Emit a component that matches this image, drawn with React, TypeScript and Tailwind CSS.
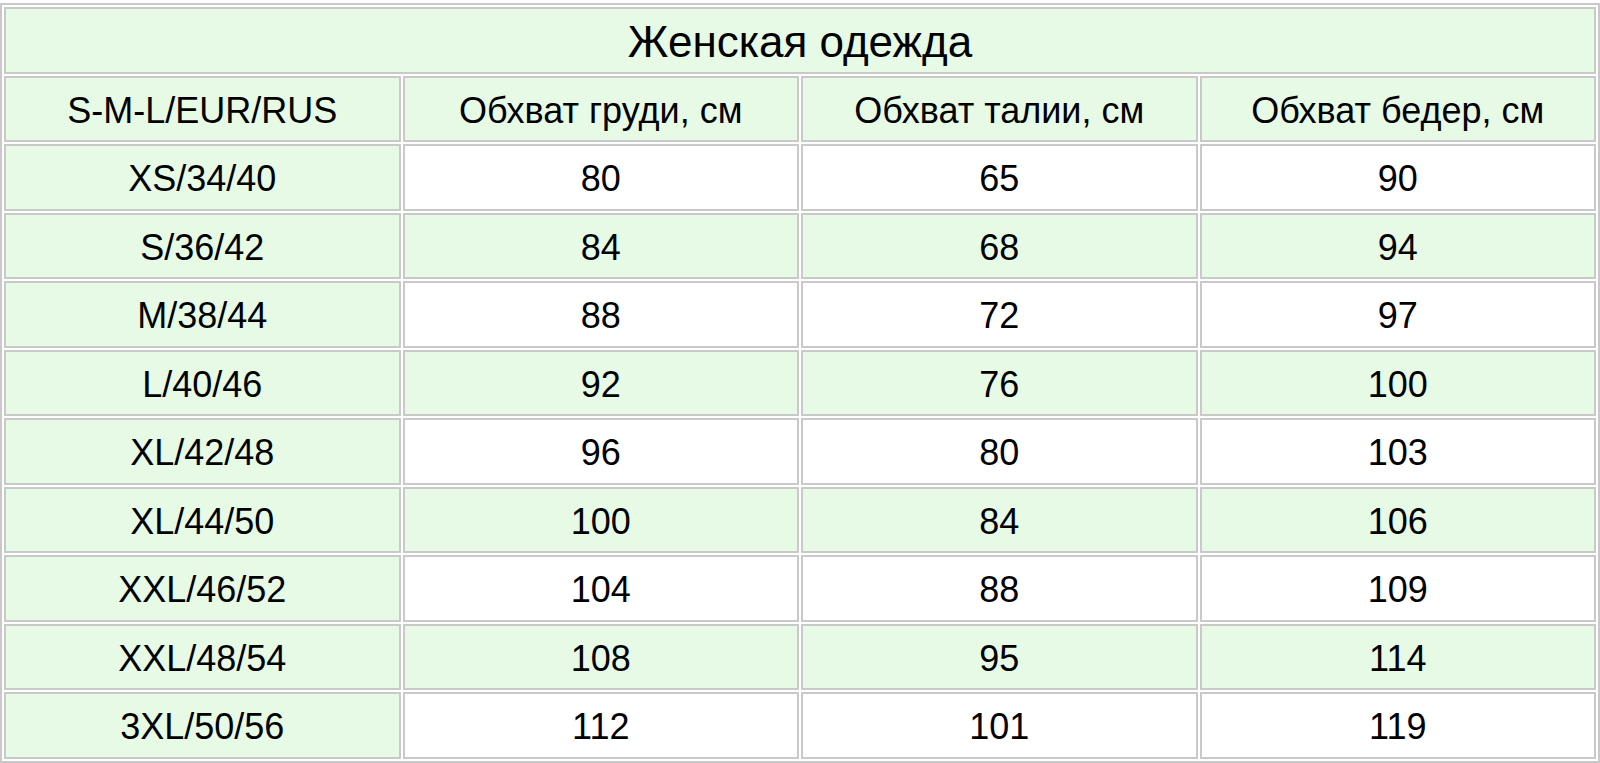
const rows: [string, number, number, number][] = [
  ["XS/34/40", 80, 65, 90],
  ["S/36/42", 84, 68, 94],
  ["M/38/44", 88, 72, 97],
  ["L/40/46", 92, 76, 100],
  ["XL/42/48", 96, 80, 103],
  ["XL/44/50", 100, 84, 106],
  ["XXL/46/52", 104, 88, 109],
  ["XXL/48/54", 108, 95, 114],
  ["3XL/50/56", 112, 101, 119],
];

const headers = ["S-M-L/EUR/RUS", "Обхват груди, см", "Обхват талии, см", "Обхват бедер, см"];

const cell = "border-2 border-[#c9c9c9] h-[66.5px] px-0 pt-[4px] pb-0 text-center align-middle";

export default function App() {
  return (
    <div className="bg-white min-h-screen pt-[3px] font-['Liberation_Sans',Arial,sans-serif] text-black">
      <table className="w-[1600px] table-fixed border-separate border-spacing-[2px] border-2 border-[#c9c9c9] text-[36px] leading-none">
        <tbody>
          <tr>
            <td colSpan={4} className={`${cell} bg-[#e7fae5] text-[44px]`}>
              Женская одежда
            </td>
          </tr>
          <tr>
            {headers.map((h) => (
              <td key={h} className={`${cell} bg-[#e7fae5]`}>
                {h}
              </td>
            ))}
          </tr>
          {rows.map(([size, chest, waist, hips], i) => {
            const bg = i % 2 === 1 ? "bg-[#e7fae5]" : "bg-white";
            return (
              <tr key={size}>
                <td className={`${cell} bg-[#e7fae5]`}>{size}</td>
                <td className={`${cell} ${bg}`}>{chest}</td>
                <td className={`${cell} ${bg}`}>{waist}</td>
                <td className={`${cell} ${bg}`}>{hips}</td>
              </tr>
            );
          })}
        </tbody>
      </table>
    </div>
  );
}
